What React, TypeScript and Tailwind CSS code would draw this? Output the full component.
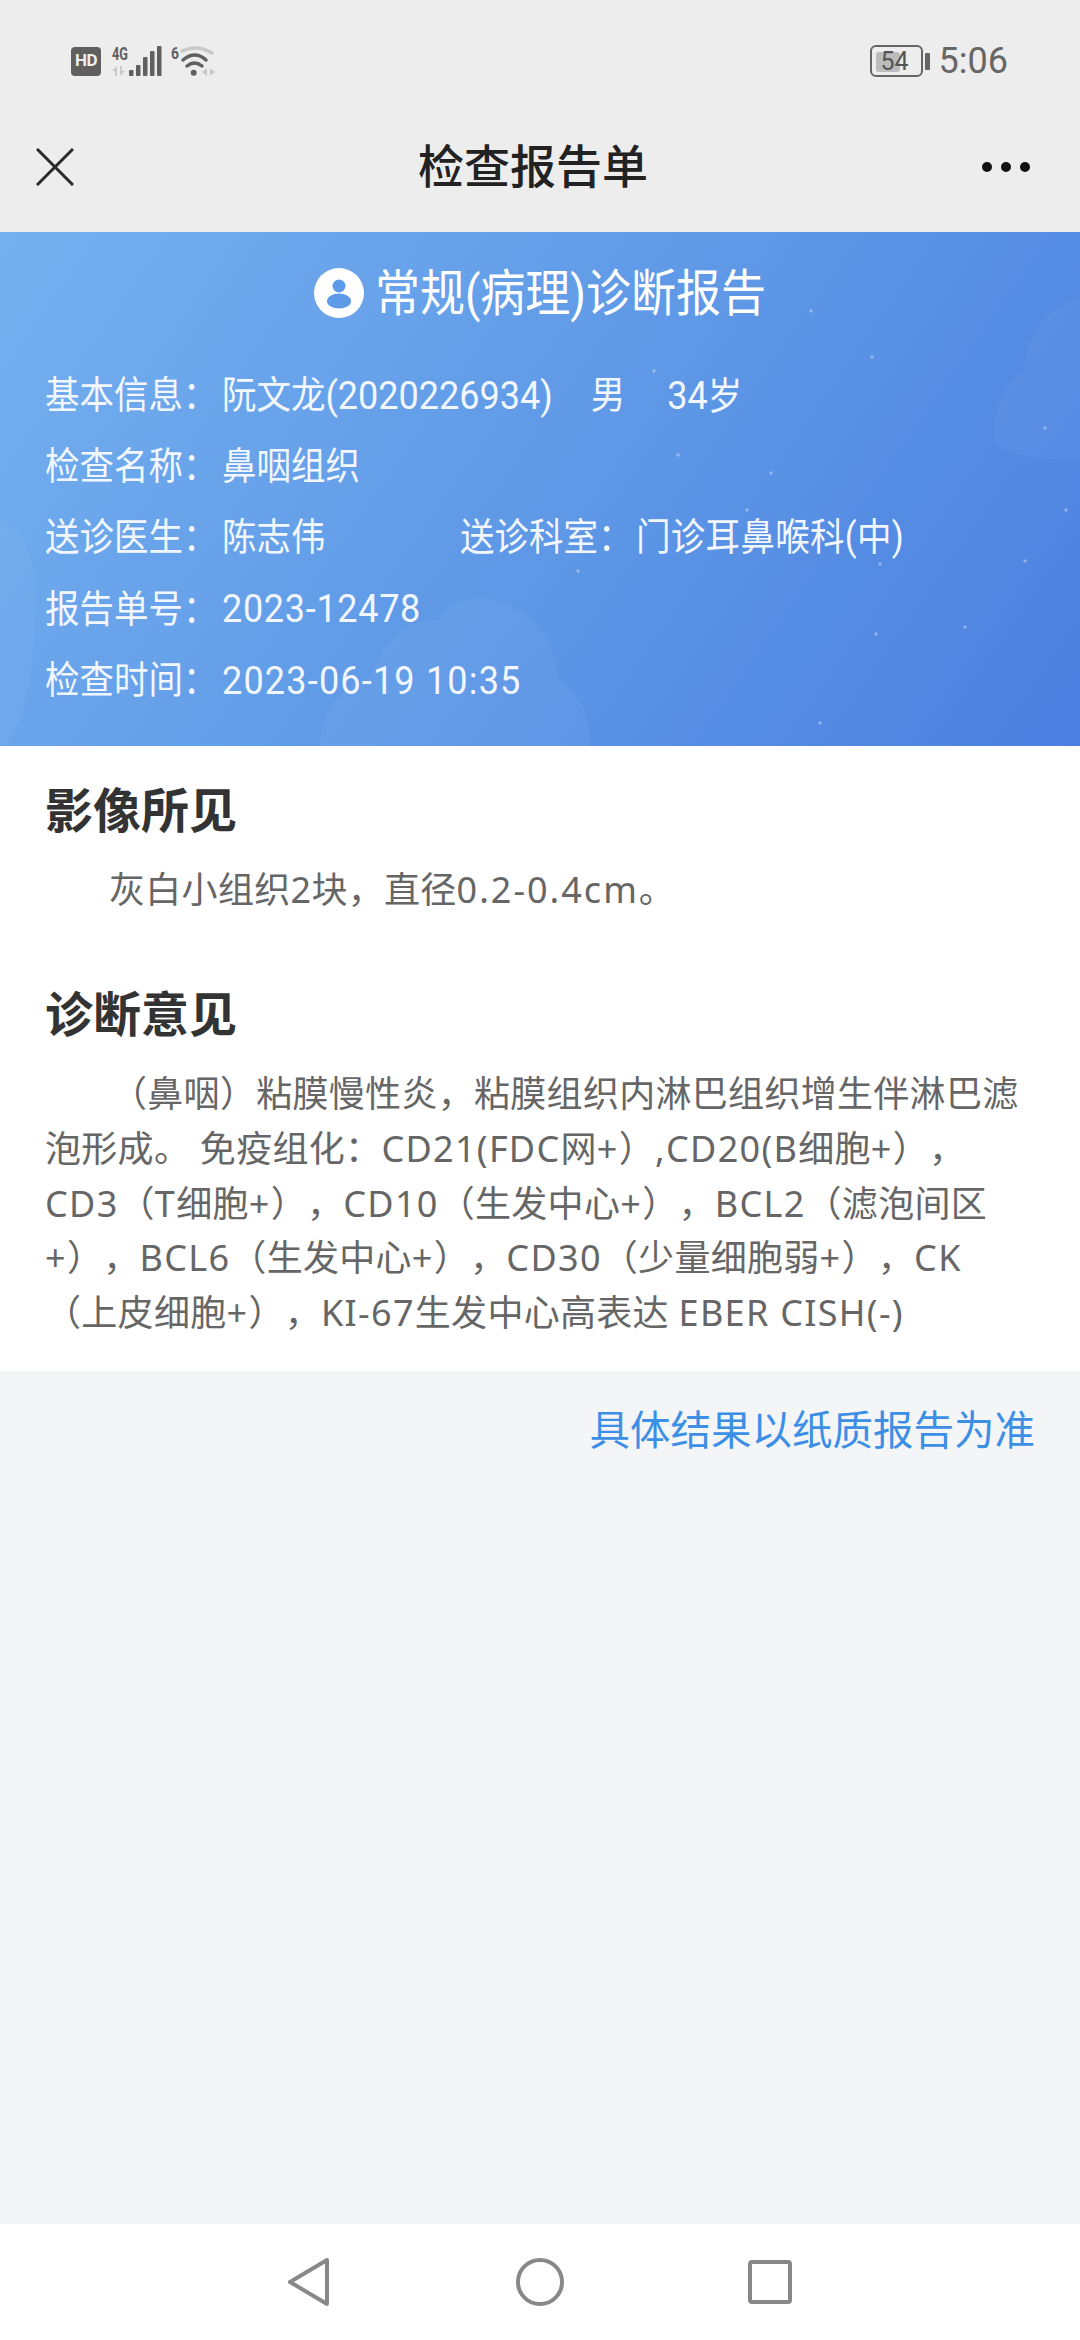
import type { ReactNode } from "react";

const cjk = "font-['Roboto','Noto_Sans_CJK_SC',sans-serif]";
const bodyFont = "font-['Noto_Sans','Noto_Sans_CJK_SC',sans-serif]";

const StatusBar = () => (
  <div className="flex h-[118px] items-center justify-between pt-[4px] pr-[72px] pl-[71px]">
    <div className="flex items-center">
      <div className="flex h-[29px] w-[30px] items-center justify-center rounded-[4px] bg-[#5f5f5f] text-[17px] font-bold tracking-[-0.5px] text-[#eee]">
        HD
      </div>
      <svg width="105" height="40" viewBox="0 -4 105 40" className="ml-[10px]" fill="#606060">
        <text x="1" y="15" fontSize="18" fontWeight="700" fontFamily="Roboto" textLength="16" lengthAdjust="spacingAndGlyphs">4G</text>
        <path d="M1 26l5-5v10h-2v-5zM9 21h2v5h3l-5 5z" fill="#c9c9c9" />
        <rect x="18" y="25" width="4.5" height="6" rx="1" />
        <rect x="25" y="20" width="4.5" height="11" rx="1" />
        <rect x="32" y="12" width="4.5" height="19" rx="1" />
        <rect x="39" y="6" width="4.5" height="25" rx="1" />
        <rect x="46" y="1" width="4.5" height="30" rx="1" />
        <text x="60" y="14" fontSize="17" fontWeight="700" fontFamily="Roboto" textLength="8" lengthAdjust="spacingAndGlyphs">6</text>
        <path d="M71 6Q86 -1 101 8" fill="none" stroke="#c9c9c9" strokeWidth="3.5" strokeLinecap="round" />
        <path d="M72 15Q84 5 95 15" fill="none" stroke="#606060" strokeWidth="3.5" strokeLinecap="round" />
        <path d="M76 21Q83.5 15 91 21" fill="none" stroke="#606060" strokeWidth="3.5" strokeLinecap="round" />
        <circle cx="82.7" cy="27.7" r="3" />
        <path d="M91 27l5-4v8zM99 23v8l5-4z" fill="#c9c9c9" />
      </svg>
    </div>
    <div className="flex items-center">
      <div className="relative flex h-[32px] w-[53px] items-center justify-center rounded-[6px] border-[2px] border-[#666]">
        <div className="absolute top-[5px] left-[4px] h-[20px] w-[24px] rounded-[3px] bg-[#bcbcbc]" />
        <span className="relative pr-[3px] text-[25px] leading-none text-[#555]">54</span>
      </div>
      <div className="ml-[2px] h-[17px] w-[5px] rounded-[1px] bg-[#666]" />
      <span className="ml-[9px] text-[36px] leading-none text-[#666]">5:06</span>
    </div>
  </div>
);

const NavBar = () => (
  <div className="flex h-[114px] items-center justify-between pr-[50px] pb-[16px] pl-[36px]">
    <svg width="38" height="38" viewBox="0 0 38 38" stroke="#2a2a2a" strokeWidth="3">
      <path d="M1 1l36 36M37 1L1 37" />
    </svg>
    <h1 className="ml-[10px] text-[46px] font-medium leading-none text-[#222]">检查报告单</h1>
    <div className="flex gap-[9px]">
      <span className="size-[10px] rounded-full bg-[#111]" />
      <span className="size-[10px] rounded-full bg-[#111]" />
      <span className="size-[10px] rounded-full bg-[#111]" />
    </div>
  </div>
);

const Num = ({ children, className }: { children: ReactNode; className?: string }) => (
  <span className={`text-[36px] ${className ?? ""}`}>{children}</span>
);

// latin runs sit wider than the cjk cells in the body copy
const L = ({ children }: { children: ReactNode }) => (
  <span className="tracking-[1.3px]">{children}</span>
);

const Row = ({ label, children }: { label: string; children: ReactNode }) => (
  <div className="flex h-[71.25px] items-center whitespace-pre text-[34.5px] text-[#f2f7ff]">
    <span className="w-[177px] scale-y-110">{label}：</span>
    <span className="flex scale-y-110 items-center">{children}</span>
  </div>
);

// clouds and specks painted into the banner artwork
const specks = [
  [811, 311], [872, 357], [1045, 428], [771, 473], [1066, 510], [880, 564], [1025, 561],
  [965, 627], [876, 634], [820, 723], [654, 371], [678, 455], [747, 510], [578, 571],
];

const BannerArt = () => (
  <svg width="1080" height="514" viewBox="0 232 1080 514" className="pointer-events-none absolute top-0 left-0">
    <g fill="#fff" opacity="0.04">
      <path d="M0 520c22 4 36 40 36 80 0 60-14 146-36 146z" />
      <path d="M1080 298c-40 10-54 44-56 76-26 10-30 40-30 66 0 14 40 20 86 20z" />
      <path d="M320 746c0-34 22-62 52-70 8-34 36-58 66-56 16-26 56-30 84-8 26 18 36 44 36 68 26 14 32 40 32 66z" />
    </g>
    {specks.map(([x, y]) => (
      <circle key={`${x}-${y}`} cx={x} cy={y} r="1.8" fill="#fff" opacity="0.35" />
    ))}
  </svg>
);

const Banner = () => (
  <section className="relative h-[514px] bg-[linear-gradient(125deg,#74b0ef_0%,#5d97e6_55%,#4c7fe0_100%)] px-[45px] pt-[29px]">
    <BannerArt />
    <div className="relative flex h-[64px] items-center justify-center">
      <svg width="50" height="50" viewBox="0 0 50 50">
        <circle cx="25" cy="25" r="25" fill="#fff" />
        <circle cx="25" cy="18" r="6.5" fill="#5d9be9" />
        <ellipse cx="25" cy="33" rx="12" ry="7.5" fill="#5d9be9" />
      </svg>
      <h2 className="ml-[11px] scale-y-110 text-[45px] leading-none text-white">常规(病理)诊断报告</h2>
    </div>
    <div className="relative mt-[35px]">
      <Row label="基本信息">
        阮文龙<Num>(2020226934)</Num>
        <span className="ml-[38px]">男</span>
        <span className="ml-[42px]"><Num>34</Num>岁</span>
      </Row>
      <Row label="检查名称">鼻咽组织</Row>
      <div className="flex h-[71.25px] items-center text-[34.5px] text-[#f2f7ff]">
        <span className="w-[177px] scale-y-110">送诊医生：</span>
        <span className="w-[238px] scale-y-110">陈志伟</span>
        <span className="w-[176px] scale-y-110">送诊科室：</span>
        <span className="scale-y-110 tracking-[0.3px]">门诊耳鼻喉科(中)</span>
      </div>
      <Row label="报告单号"><Num className="tracking-[0.7px]">2023-12478</Num></Row>
      <Row label="检查时间"><Num className="tracking-[1.2px]">2023-06-19 10:35</Num></Row>
    </div>
  </section>
);

const Findings = () => (
  <section className={`h-[625px] bg-white px-[45px] pt-[32px] [text-spacing-trim:space-all] ${bodyFont}`}>
    <h3 className="text-[48px] font-bold leading-[64px] text-[#333]">影像所见</h3>
    <p className="mt-[20px] indent-[64px] text-[36px] leading-[55px] tracking-[0.3px] text-[#666]">灰白小组织2块，直径<span className="tracking-[2px]">0.2-0.4cm</span>。</p>
    <h3 className="mt-[65px] text-[48px] font-bold leading-[64px] text-[#333]">诊断意见</h3>
    <p className="mt-[21px] indent-[66px] text-[36px] leading-[54.8px] tracking-[0.3px] text-[#666] whitespace-nowrap">
      （鼻咽）粘膜慢性炎，粘膜组织内淋巴组织增生伴淋巴滤<br />
      泡形成。 免疫组化：<L>CD21(FDC</L>网<L>+</L>）<L>,CD20(B</L>细胞<L>+</L>），<br />
      <L>CD3</L>（<L>T</L>细胞<L>+</L>），<L>CD10</L>（生发中心<L>+</L>），<L>BCL2</L>（滤泡间区<br />
      <L>+</L>），<L>BCL6</L>（生发中心<L>+</L>），<L>CD30</L>（少量细胞弱<L>+</L>），<L>CK</L><br />
      （上皮细胞<L>+</L>），<L>KI-67</L>生发中心高表达 <L>EBER CISH(-)</L>
    </p>
  </section>
);

const BottomNav = () => (
  <div className="flex h-[116px] items-center justify-center bg-white">
    <svg width="42" height="48" viewBox="0 0 42 48" fill="none" stroke="#888" strokeWidth="4" strokeLinejoin="round">
      <path d="M39 2v44L2 24z" />
    </svg>
    <svg width="48" height="48" viewBox="0 0 48 48" fill="none" stroke="#888" strokeWidth="4" className="mr-[184px] ml-[186px]">
      <circle cx="24" cy="24" r="22" />
    </svg>
    <svg width="44" height="44" viewBox="0 0 44 44" fill="none" stroke="#888" strokeWidth="4" strokeLinejoin="round">
      <rect x="2" y="2" width="40" height="40" rx="2" />
    </svg>
  </div>
);

export default function App() {
  return (
    <div className={`flex h-[2340px] w-[1080px] flex-col bg-[#f4f5f7] ${cjk}`}>
      <div className="bg-[#ededed]">
        <StatusBar />
        <NavBar />
      </div>
      <Banner />
      <Findings />
      <div className="flex-1 pt-[35px] pr-[45px] text-right text-[40.5px] leading-[50px] text-[#3d8fe6]">
        具体结果以纸质报告为准
      </div>
      <BottomNav />
    </div>
  );
}
